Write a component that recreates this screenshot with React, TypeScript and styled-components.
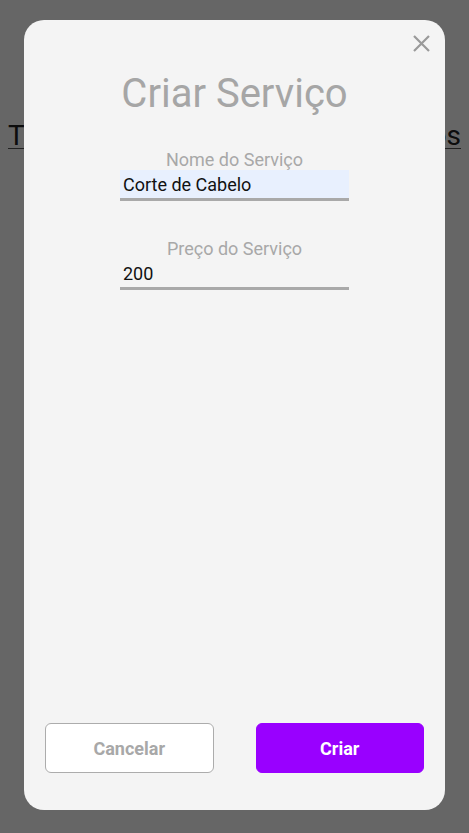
import React from "react";
import styled, { createGlobalStyle } from "styled-components";

const Global = createGlobalStyle`
  html, body { margin: 0; padding: 0; }
  body { font-family: Roboto, "Liberation Sans", sans-serif; background: #ffffff; }
  * { box-sizing: border-box; }
`;

const Page = styled.div`
  padding: 8px;
`;

const PageHeader = styled.div`
  margin-top: 116px;
  display: flex;
  justify-content: space-between;
  border-bottom: 1px solid #555;
  font-size: 28px;
  color: #222;
  line-height: 24px;
`;

const Overlay = styled.div`
  position: fixed;
  inset: 0;
  background: rgba(0, 0, 0, 0.6);
  display: flex;
  align-items: flex-start;
  justify-content: center;
  padding-top: 20px;
`;

const Modal = styled.div`
  position: relative;
  width: 421px;
  height: 790px;
  background: #f4f4f4;
  border-radius: 20px;
  display: flex;
  flex-direction: column;
  align-items: center;
  padding: 0 21px 37px;
`;

const Close = styled.button`
  position: absolute;
  top: 15px;
  right: 15px;
  width: 17px;
  height: 17px;
  padding: 0;
  border: 0;
  background: transparent;
  display: flex;
  align-items: center;
  justify-content: center;
  cursor: pointer;
`;

const Title = styled.h1`
  margin: 52px 0 0;
  font-size: 40px;
  font-weight: 400;
  color: #a6a6a6;
  line-height: 44px;
`;

const Form = styled.div`
  margin-top: 34px;
  width: 229px;
  display: flex;
  flex-direction: column;
  gap: 38px;
`;

const Field = styled.label`
  display: flex;
  flex-direction: column;
  align-items: center;
`;

const Label = styled.span`
  font-size: 18px;
  color: #a8a8a8;
  line-height: 20px;
`;

const Input = styled.input<{ $filled?: boolean }>`
  width: 100%;
  height: 31px;
  border: 0;
  border-bottom: 3px solid #a9a9a9;
  background: ${(p) => (p.$filled ? "#e8f0fe" : "transparent")};
  font-family: Roboto, "Liberation Sans", sans-serif;
  font-size: 18px;
  color: #111;
  padding: 1px 3px 0;
  outline: none;
`;

const Spacer = styled.div`
  flex: 1;
`;

const Actions = styled.div`
  width: 100%;
  display: flex;
  gap: 42px;
`;

const Button = styled.button<{ $primary?: boolean }>`
  flex: 1;
  height: 50px;
  border-radius: 6px;
  border: 1px solid ${(p) => (p.$primary ? "#9900ff" : "#acacac")};
  background: ${(p) => (p.$primary ? "#9900ff" : "#ffffff")};
  color: ${(p) => (p.$primary ? "#ffffff" : "#a8a8a8")};
  font-family: Roboto, "Liberation Sans", sans-serif;
  font-weight: 700;
  font-size: 18px;
  cursor: pointer;
`;

export default function App() {
  return (
    <>
      <Global />
      <Page>
        <PageHeader>
          <span>Tipos</span>
          <span>Serviços</span>
        </PageHeader>
      </Page>
      <Overlay>
        <Modal>
          <Close aria-label="Fechar">
            <svg width="17" height="17" viewBox="0 0 17 17">
              <path d="M1 1 L16 16 M16 1 L1 16" stroke="#9a9a9a" strokeWidth="2.2" />
            </svg>
          </Close>
          <Title>Criar Serviço</Title>
          <Form>
            <Field>
              <Label>Nome do Serviço</Label>
              <Input $filled defaultValue="Corte de Cabelo" />
            </Field>
            <Field>
              <Label>Preço do Serviço</Label>
              <Input defaultValue="200" autoFocus />
            </Field>
          </Form>
          <Spacer />
          <Actions>
            <Button>Cancelar</Button>
            <Button $primary>Criar</Button>
          </Actions>
        </Modal>
      </Overlay>
    </>
  );
}
